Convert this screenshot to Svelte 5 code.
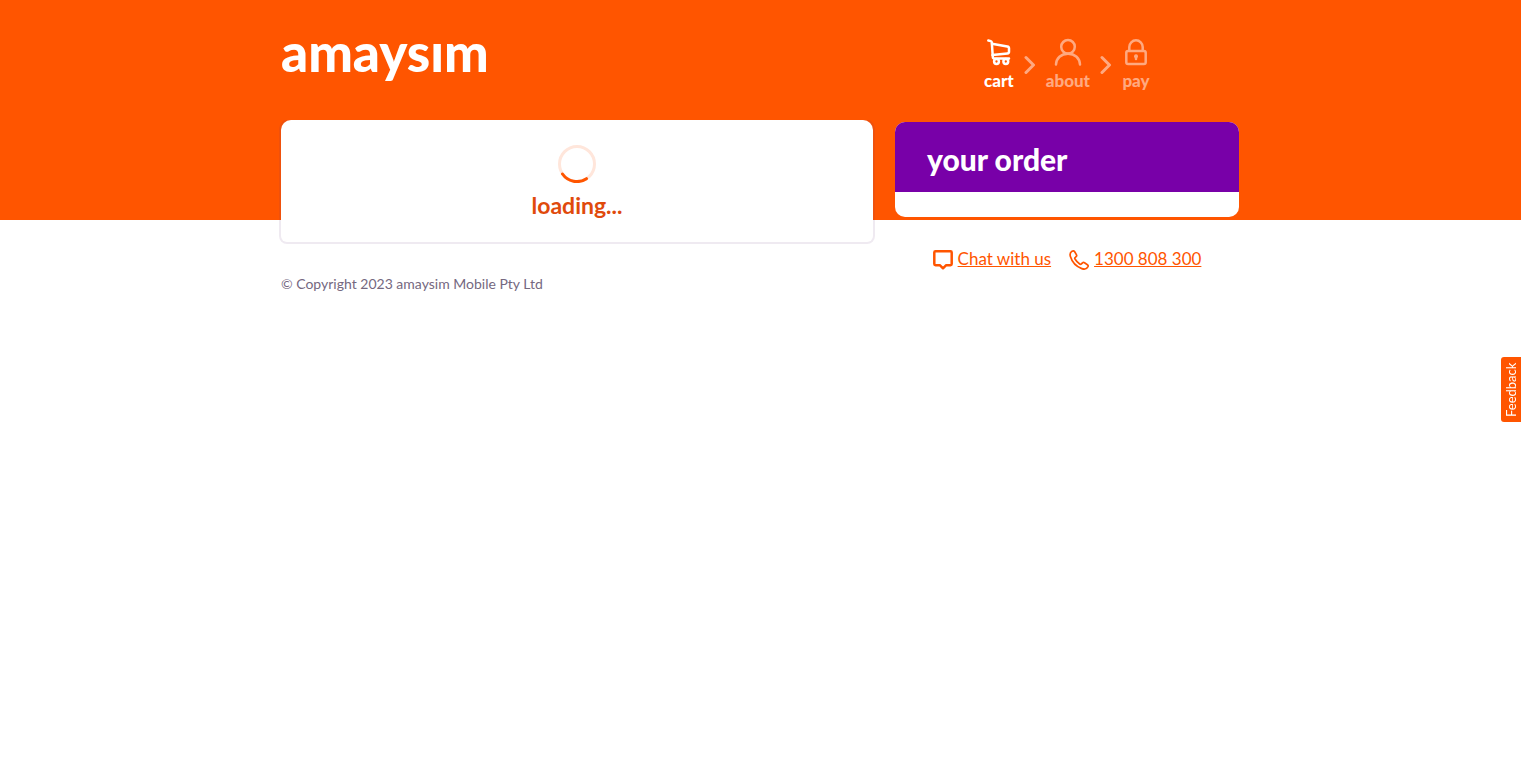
<script>
  const steps = [
    { id: 'cart', label: 'cart', current: true },
    { id: 'about', label: 'about', current: false },
    { id: 'pay', label: 'pay', current: false }
  ];
</script>

<div class="page">
  <header class="container columns top">
    <a class="logo" href="#home" aria-label="amaysim">amaysım</a>
    <nav aria-label="Checkout progress">
      <ol class="steps">
        {#each steps as step, i}
          {#if i > 0}
            <li class="chevron" aria-hidden="true">
              <svg width="12" height="20" viewBox="0 0 12 20"><path d="M2 2.500 9.500 10 2 17.500" /></svg>
            </li>
          {/if}
          <li class="step" class:current={step.current} aria-current={step.current ? 'step' : undefined}>
            <svg width="28" height="28" viewBox="0 0 28 28" stroke-width="2.5" aria-hidden="true">
              {#if step.id === 'cart'}
                <path d="M3.300 2.500l2.500.6q1 .3 1 1.400l1 14.500q.1 1.500 1.500 1.500H24" />
                <path d="M7 5.800l15.300 2.700q1.700.3 1.700 1.800v3.400q0 1.500-1.600 1.700L7.500 17" />
                <circle cx="11.500" cy="23.500" r="2.400" /><circle cx="20.800" cy="23.500" r="2.400" />
              {:else if step.id === 'about'}
                <circle cx="14" cy="8.800" r="6.800" />
                <path d="M2 26.500C2.300 20.300 7 15.700 14 15.700S25.700 20.300 26 26.500" />
              {:else}
                <rect x="4.300" y="13" width="19.400" height="13" rx="1.800" />
                <path d="M7.300 12.500V9a6.700 6.700 0 0 1 13.400 0v3.500" />
                <circle class="solid" cx="14" cy="18.300" r="2" /><path d="M14 18v3" />
              {/if}
            </svg>
            <span>{step.label}</span>
          </li>
        {/each}
      </ol>
    </nav>
  </header>

  <div class="container columns">
    <main>
      <section class="card loading" role="status">
        <svg width="38" height="38" viewBox="0 0 38 38" stroke-width="3" aria-hidden="true">
          <circle class="track" cx="19" cy="19" r="17.500" />
          <path d="M4.500 29A17.500 17.500 0 0 0 28.500 33.700" />
        </svg>
        <p>loading...</p>
      </section>
      <footer>© Copyright 2023 amaysim Mobile Pty Ltd</footer>
    </main>

    <aside>
      <section class="card order">
        <h2>your order</h2>
      </section>
      <div class="contact">
        <a href="#chat">
          <svg width="20" height="20" viewBox="0 0 20 20" stroke-width="2.5" aria-hidden="true">
            <path d="M2.500 1.300h15q1.200 0 1.200 1.200v11.500q0 1.200-1.200 1.200h-4.300L10 18.300l-3.200-3.100H2.500q-1.200 0-1.200-1.200V2.500q0-1.200 1.200-1.200Z" />
          </svg>
          <span>Chat with us</span>
        </a>
        <a href="#phone">
          <svg width="20" height="20" viewBox="0 0 20 20" stroke-width="1.7" aria-hidden="true">
            <path d="M3 1.300C1.200 2.300.7 4.200 1.400 6.600c1.700 5.600 5.900 10.100 11.400 12 2.700.9 5.100.4 6.200-1.900.4-.9.100-1.500-.6-2l-2.900-1.900c-.8-.5-1.500-.4-2.100.2l-1 .9c-.5.5-1.100.5-1.700.1-1.900-1.300-3.500-3-4.700-5-.4-.6-.3-1.200.3-1.600l.8-.7c.6-.5.8-1.200.4-1.900L5.700 1.700C5 .8 4.200.7 3 1.300Z" />
          </svg>
          <span>1300 808 300</span>
        </a>
      </div>
    </aside>
  </div>

  <button class="feedback" type="button">Feedback</button>
</div>

<style>
  :global(body) {
    margin: 0;
    background: #fff;
  }

  .page {
    --orange: #ff5500;
    --ring: rgba(98, 50, 120, 0.1);
    min-height: 100vh;
    background: linear-gradient(var(--orange) 220px, #fff 220px);
    font-family: Lato, "Open Sans", sans-serif;
    color: #75687f;
  }

  svg {
    display: block;
    fill: none;
    stroke: currentColor;
    stroke-linecap: round;
    stroke-linejoin: round;
  }

  .container {
    width: 959px;
    max-width: calc(100% - 32px);
    margin: 0 auto;
  }

  .columns {
    display: grid;
    grid-template-columns: minmax(0, 592px) minmax(0, 344px);
    column-gap: 22px;
  }

  .logo {
    justify-self: start;
    padding-top: 20px;
    color: #fff;
    font-size: 53px;
    font-weight: 900;
    line-height: 64px;
    text-decoration: none;
  }

  .top {
    height: 120px;
  }

  .steps {
    display: flex;
    justify-content: center;
    gap: 10px;
    margin: 0;
    padding: 38px 0 0;
    list-style: none;
    color: #ffa980;
    font-size: 17px;
    font-weight: 900;
    line-height: 20px;
  }

  .step {
    display: flex;
    flex-direction: column;
    align-items: center;
    gap: 5px;
  }

  .step .solid {
    fill: currentColor;
    stroke: none;
  }

  .current {
    color: #fff;
  }

  .chevron {
    padding-top: 17px;
  }

  .chevron svg {
    stroke-width: 3;
  }

  .card {
    border-radius: 10px;
    background: #fff;
  }

  .loading {
    display: flex;
    flex-direction: column;
    align-items: center;
    gap: 8px;
    padding: 25px 0 23px;
    border-radius: 10px 10px 6px 6px;
    box-shadow: 0 0 0 2px var(--ring);
    clip-path: inset(0 -2px -2px);
  }

  .loading svg {
    color: var(--orange);
  }

  .loading .track {
    stroke: #ffe6db;
  }

  .loading p {
    margin: 0;
    color: #e04a0c;
    font-size: 23px;
    font-weight: 700;
    line-height: 28px;
  }

  footer {
    padding-top: 32px;
    font-size: 14px;
    line-height: 20px;
  }

  .order {
    margin-top: 2px;
    padding-bottom: 25px;
  }

  h2 {
    margin: 0;
    padding: 19px 32px 15px;
    border-radius: 10px 10px 0 0;
    background: #7800a8;
    color: #fff;
    font-size: 30px;
    font-weight: 900;
    line-height: 36px;
  }

  .contact {
    display: flex;
    flex-wrap: wrap;
    justify-content: center;
    gap: 18px;
    padding-top: 32px;
    font-size: 17px;
    line-height: 20px;
  }

  .contact a {
    display: flex;
    gap: 5px;
    color: var(--orange);
    text-decoration: none;
  }

  .contact span {
    text-decoration: underline;
  }

  .contact svg {
    margin-top: 1px;
  }

  .feedback {
    position: fixed;
    top: 357px;
    right: 0;
    width: 20px;
    height: 65px;
    padding: 0;
    border: 0;
    border-radius: 0 3px 3px 0;
    background: var(--orange);
    color: #fff;
    font-family: inherit;
    font-size: 13px;
    line-height: 20px;
    writing-mode: vertical-rl;
    transform: rotate(180deg);
  }
</style>
